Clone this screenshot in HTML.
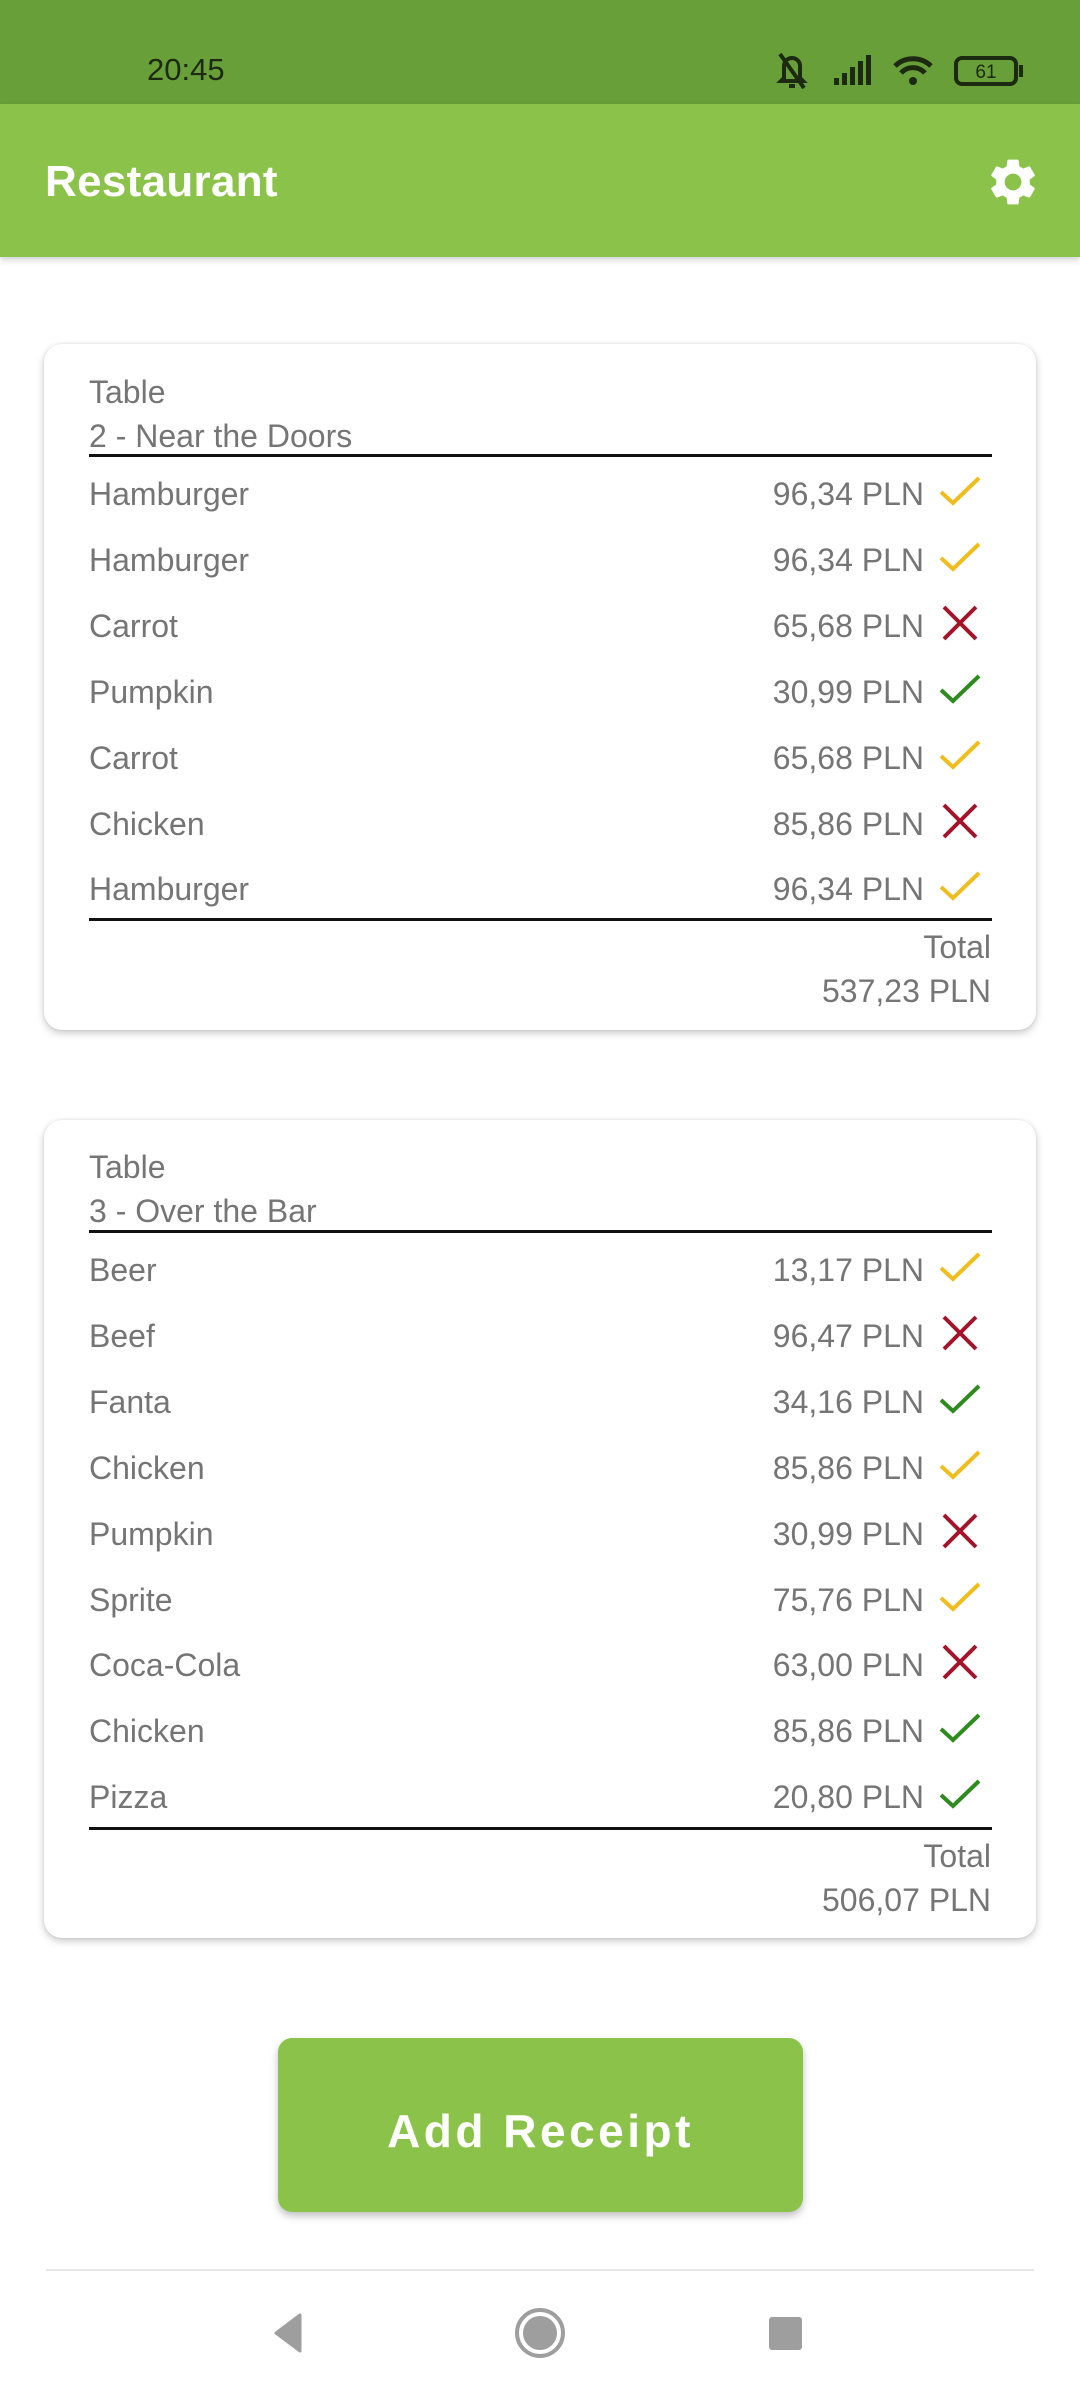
<!DOCTYPE html>
<html><head><meta charset="utf-8"><style>
*{margin:0;padding:0;box-sizing:border-box}
body{width:1080px;height:2400px;background:#fff;position:relative;font-family:"Liberation Sans",sans-serif;overflow:hidden}
.abs{position:absolute}
.sb{left:0;top:0;width:1080px;height:104px;background:#689f38}
.ab{left:0;top:104px;width:1080px;height:153px;background:#8bc34a;box-shadow:0 3px 6px rgba(0,0,0,.18)}
.card{left:44px;width:992px;background:#fff;border-radius:18px;box-shadow:0 3px 8px rgba(0,0,0,.22),0 0 2px rgba(0,0,0,.1)}
.t{position:absolute;font-size:32px;color:#757575;line-height:36px;white-space:nowrap}
.r{text-align:right}
.hl{position:absolute;left:89px;width:903px;height:3px;background:#111}
.ic{position:absolute;left:938px;width:44px;height:44px}
</style></head><body>
<div class="abs sb"></div>
<div class="abs" style="left:147px;top:52px;font-size:31px;color:#1b2a10">20:45</div>
<svg class="abs" style="left:770px;top:48px" width="260" height="44" viewBox="0 0 260 44">
 <g fill="none" stroke="#1b2a10" stroke-width="4">
  <path d="M14 30 V18 a8 8 0 0 1 16 0 V30 l3 3 H11z"/><path d="M10 6 L34 40"/>
 </g>
 <rect x="19" y="36" width="6" height="4" fill="#1b2a10"/>
 <g fill="#1b2a10"><rect x="64" y="30" width="5" height="7"/><rect x="72" y="25" width="5" height="12"/><rect x="80" y="19" width="5" height="18"/><rect x="88" y="13" width="5" height="24"/><rect x="96" y="7" width="5" height="30"/></g>
 <g fill="none" stroke="#1b2a10" stroke-width="5"><path d="M125 18 a26 26 0 0 1 36 0"/><path d="M131 25 a16 16 0 0 1 24 0"/></g>
 <circle cx="143" cy="33" r="4" fill="#1b2a10"/>
 <rect x="186" y="10" width="60" height="26" rx="6" fill="none" stroke="#1b2a10" stroke-width="4"/>
 <rect x="249" y="17" width="4" height="12" fill="#1b2a10"/>
 <text x="216" y="30" font-size="19" text-anchor="middle" fill="#1b2a10" font-family="Liberation Sans">61</text>
</svg>
<div class="abs ab"></div>
<div class="abs" style="left:45px;top:157px;font-size:44px;color:#fff;font-weight:bold;letter-spacing:0.3px">Restaurant</div>
<svg class="abs" style="left:985px;top:154px" width="56" height="56" viewBox="0 0 24 24"><path fill="#fff" d="M19.14 12.94c.04-.3.06-.61.06-.94 0-.32-.02-.64-.07-.94l2.030-1.58a.49.49 0 0 0 .12-.61l-1.92-3.32a.488.488 0 0 0-.59-.22l-2.39.96c-.5-.38-1.03-.7-1.620-.94l-.36-2.540a.484.484 0 0 0-.48-.41h-3.84c-.24 0-.43.17-.47.41l-.36 2.54c-.59.24-1.13.57-1.62.94l-2.39-.96c-.22-.08-.47 0-.59.22L2.74 8.87c-.12.21-.08.47.12.61l2.03 1.58c-.05.3-.09.63-.09.94s.02.64.07.94l-2.03 1.58a.49.49 0 0 0-.12.61l1.92 3.32c.12.22.37.29.59.22l2.39-.96c.5.38 1.03.7 1.62.94l.36 2.54c.05.24.24.41.48.41h3.84c.24 0 .44-.17.47-.41l.36-2.54c.59-.24 1.13-.56 1.62-.94l2.39.96c.22.08.47 0 .59-.22l1.92-3.32c.12-.22.07-.47-.12-.61l-2.01-1.58zM12 15.6c-1.98 0-3.6-1.62-3.6-3.6s1.62-3.6 3.6-3.6 3.6 1.62 3.6 3.6-1.62 3.6-3.6 3.6z"/></svg>

<svg width="0" height="0" style="position:absolute"><defs>
<symbol id="y" viewBox="0 0 44 44"><path d="M3 24 L15 35 L41 10" fill="none" stroke="#f0bd1e" stroke-width="4"/></symbol>
<symbol id="g" viewBox="0 0 44 44"><path d="M3 24 L15 35 L41 10" fill="none" stroke="#2e8b1e" stroke-width="4"/></symbol>
<symbol id="x" viewBox="0 0 44 44"><path d="M6 7 L38 39 M38 7 L6 39" fill="none" stroke="#a3142a" stroke-width="4"/></symbol>
</defs></svg>

<div class="abs card" style="top:344px;height:686px"></div>
<div class="abs card" style="top:1120px;height:818px"></div>

<div id="c"></div>
<script>
function card(top0, name, rows, total, headY, nameY, lineY, rowY, botY, totY, amtY){
 let h='';const o=15;
 h+=`<div class="t" style="left:89px;top:${headY-o}px">Table</div>`;
 h+=`<div class="t" style="left:89px;top:${nameY-o}px">${name}</div>`;
 h+=`<div class="hl" style="top:${lineY-1}px"></div>`;
 rows.forEach((r,i)=>{let y=rowY+i*65.9;
  h+=`<div class="t" style="left:89px;top:${y-o}px">${r[0]}</div>`;
  h+=`<div class="t r" style="right:156px;top:${y-o}px">${r[1]} PLN</div>`;
  h+=`<svg class="ic" style="top:${y-23}px"><use href="#${r[2]}"/></svg>`;});
 h+=`<div class="hl" style="top:${botY-1}px"></div>`;
 h+=`<div class="t r" style="right:89px;top:${totY-o}px">Total</div>`;
 h+=`<div class="t r" style="right:89px;top:${amtY-o}px">${total} PLN</div>`;
 return h;}
document.getElementById('c').innerHTML=
 card(344,'2 - Near the Doors',[['Hamburger','96,34','y'],['Hamburger','96,34','y'],['Carrot','65,68','x'],['Pumpkin','30,99','g'],['Carrot','65,68','y'],['Chicken','85,86','x'],['Hamburger','96,34','y']],'537,23',389,433,455,491,919,944,988)+
 card(1120,'3 - Over the Bar',[['Beer','13,17','y'],['Beef','96,47','x'],['Fanta','34,16','g'],['Chicken','85,86','y'],['Pumpkin','30,99','x'],['Sprite','75,76','y'],['Coca-Cola','63,00','x'],['Chicken','85,86','g'],['Pizza','20,80','g']],'506,07',1164,1208,1231,1267,1828,1853,1897);
</script>

<div class="abs" style="left:278px;top:2038px;width:525px;height:174px;background:#8bc34a;border-radius:14px;box-shadow:0 4px 8px rgba(0,0,0,.25);color:#fff;font-size:46px;font-weight:bold;letter-spacing:3.5px;text-align:center;line-height:186px">Add Receipt</div>
<div class="abs" style="left:46px;top:2269px;width:988px;height:2px;background:#e6e6e6"></div>
<svg class="abs" style="left:270px;top:2310px" width="40" height="46" viewBox="0 0 40 46"><path d="M30 5 V41 L6 23z" fill="#9e9e9e" stroke="#9e9e9e" stroke-width="3" stroke-linejoin="round"/></svg>
<svg class="abs" style="left:514px;top:2307px" width="52" height="52" viewBox="0 0 52 52"><circle cx="26" cy="26" r="23" fill="none" stroke="#9e9e9e" stroke-width="4"/><circle cx="26" cy="26" r="17" fill="#9e9e9e"/></svg>
<div class="abs" style="left:769px;top:2317px;width:33px;height:33px;background:#9e9e9e;border-radius:3px"></div>
</body></html>
